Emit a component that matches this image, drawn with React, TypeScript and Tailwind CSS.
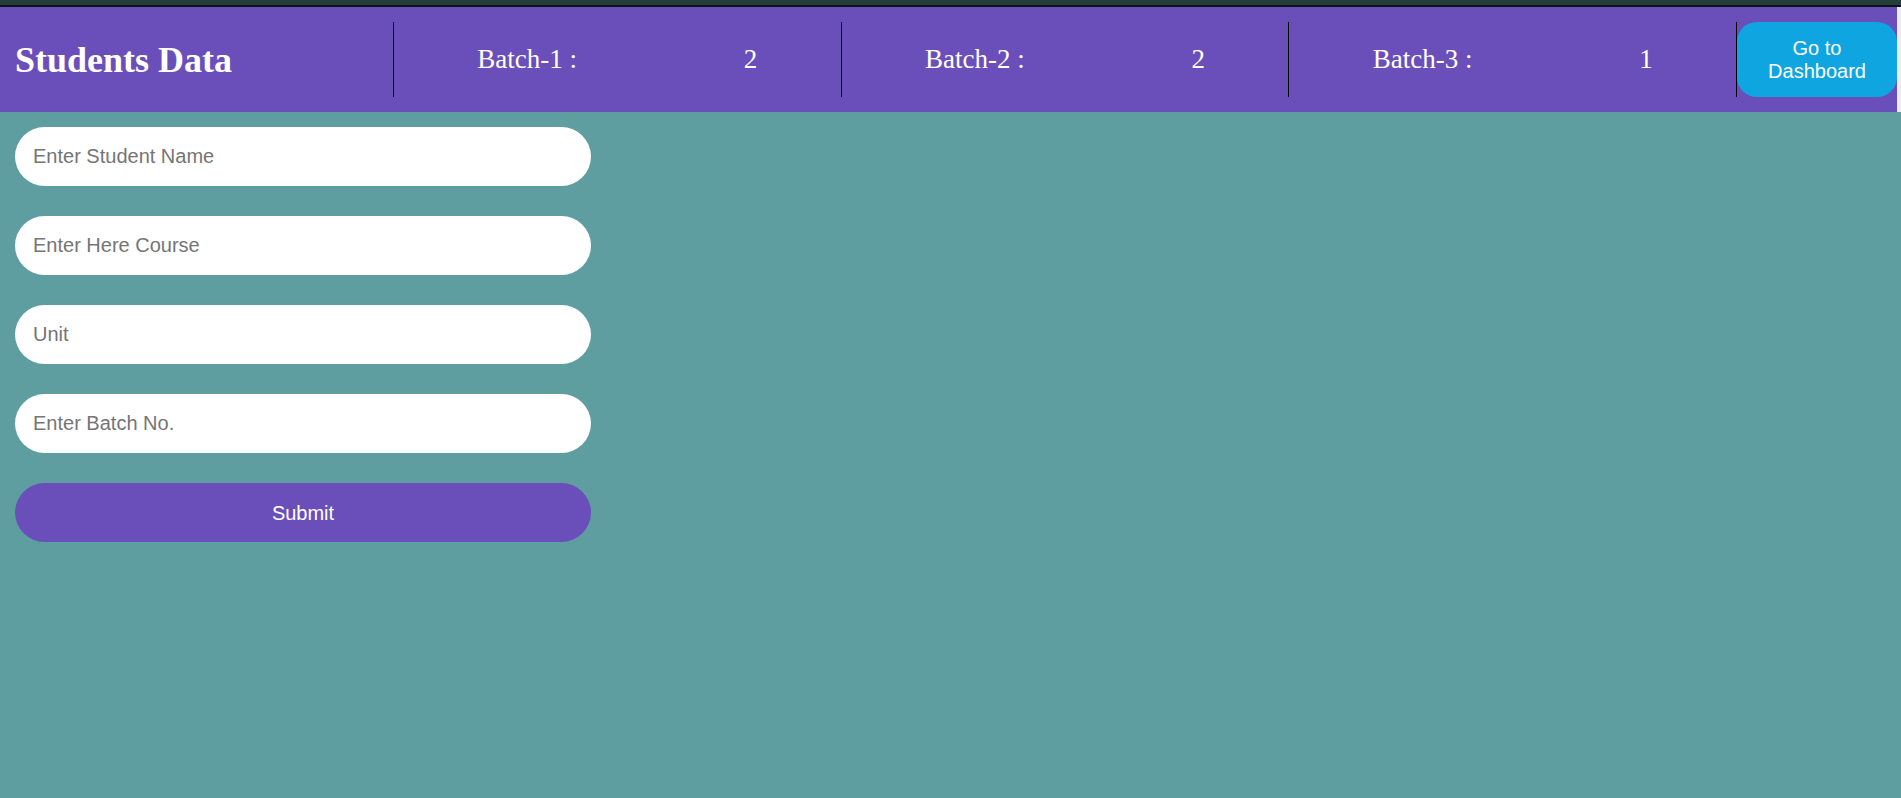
import React from "react";

const batches = [
  { label: "Batch-1 :", count: 2 },
  { label: "Batch-2 :", count: 2 },
  { label: "Batch-3 :", count: 1 },
];

const fields = ["Enter Student Name", "Enter Here Course", "Unit", "Enter Batch No."];

export default function App() {
  return (
    <div className="min-h-[798px] w-full bg-[#5f9ea0] flex flex-col">
      <div className="h-[5px] bg-[#253e3b]" />
      <div className="h-[2px] bg-[#0c1413]" />
      <div className="flex w-full">
        <header className="flex w-[1897px] h-[105px] bg-[#6a4fbb] py-[15px]">
          <div className="w-[393px] flex items-center pl-[15px]">
            <h1
              className="text-white font-bold text-[36px] leading-none"
              style={{ fontFamily: '"Liberation Serif", "Times New Roman", serif' }}
            >
              Students Data
            </h1>
          </div>
          {batches.map((b) => (
            <div
              key={b.label}
              className="flex-1 border-l border-black flex items-center justify-around text-white text-[27px]"
              style={{ fontFamily: '"Liberation Serif", "Times New Roman", serif' }}
            >
              <span>{b.label}</span>
              <span>{b.count}</span>
            </div>
          ))}
          <div className="border-l border-black" />
          <button
            className="w-[160px] rounded-[20px] bg-[#0ea5e0] text-white text-[20px] leading-[23px] px-3"
            style={{ fontFamily: '"Liberation Sans", Arial, sans-serif' }}
          >
            Go to Dashboard
          </button>
        </header>
        <div className="flex-1 h-[105px] bg-[#ececec]" />
      </div>
      <form
        className="flex flex-col gap-[30px] pt-[15px] pl-[15px] w-[591px]"
        style={{ fontFamily: '"Liberation Sans", Arial, sans-serif' }}
        onSubmit={(e) => e.preventDefault()}
      >
        {fields.map((f) => (
          <input
            key={f}
            type="text"
            placeholder={f}
            className="h-[59px] w-[576px] rounded-[30px] bg-white px-[18px] text-[20px] text-black placeholder:text-[#757575] outline-none border-0"
          />
        ))}
        <button
          type="submit"
          className="h-[59px] w-[576px] rounded-[30px] bg-[#6a4fbb] text-white text-[20px]"
        >
          Submit
        </button>
      </form>
    </div>
  );
}
